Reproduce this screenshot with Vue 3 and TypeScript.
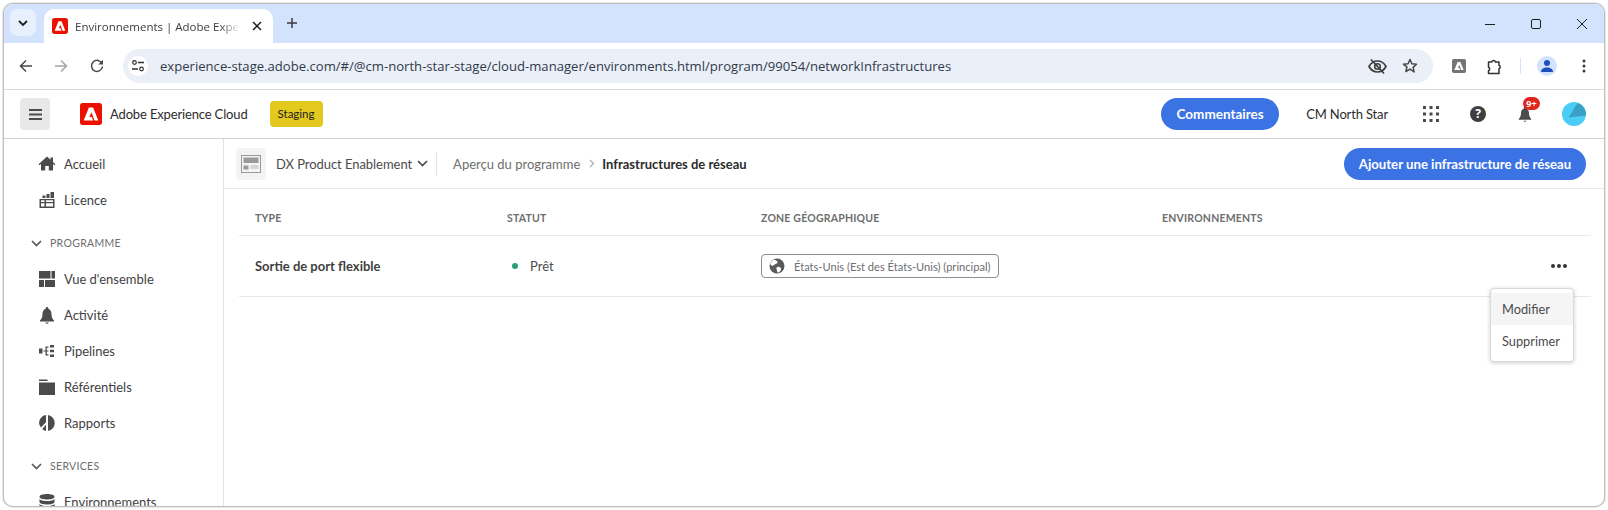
<script setup lang="ts">
interface NavItem {
  label: string;
  icon: string;
}

interface NavGroup {
  title?: string;
  items: NavItem[];
}

const groups: NavGroup[] = [
  {
    items: [
      { label: "Accueil", icon: "M9 1.5.6 9.3l.9 1L3 9v6.5h4.2V11h3.6v4.5H15V9l1.500 1.300.9-1L15 7V2.500h-2.500v2.200z" },
      { label: "Licence", icon: "M12.500 1H16v6h-3.500zM8.500 3H11.500V7H8.500zM4.500 4.500H7.500V7H4.500zM1.500 8h15v9h-15zM3 9.300V11h3.500V9.300zm5 0V11h7V9.300zM3 12.300V15.600h3.500v-3.300zm5 0V15.600h7v-3.300z" },
    ],
  },
  {
    title: "PROGRAMME",
    items: [
      { label: "Vue d'ensemble", icon: "M1 1h11.500v7.500H1zM13.500 1H17v7.500h-3.500zM1 10h5v7H1zM7 10h10v7H7z" },
      { label: "Activité", icon: "M9 1a1.300 1.300 0 0 0-1.300 1.300v.5C5.600 3.500 4.500 5.500 4.500 8c0 3.500-1 5-2.500 6.500V15.500h14v-1C14.500 13 13.500 11.500 13.500 8c0-2.500-1.100-4.500-3.200-5.200v-.5A1.300 1.300 0 0 0 9 1zM7.300 16.500a1.800 1.800 0 0 0 3.400 0z" },
      { label: "Pipelines", icon: "M1 6.500h3.500v5H1zM5.500 8.500h2V4.500h3v1.300H8.800v2.700h1.700v1H8.800v2.700h1.700v1.300h-3V9.500h-2zM12 3h4v2.500h-4zM12 7.800h4v2.400h-4zM12 12.500h4V15h-4z" },
      { label: "Référentiels", icon: "M1 1.500h8l1 1.500H1zM1 4.500h16V17H1z" },
      { label: "Rapports", icon: "M8 1.100v7.200L3 13.400A8 8 0 0 1 1 9a8 8 0 0 1 7-7.900zM10 1.100A8 8 0 0 1 10 16.900zM8 10.400v6.500a8 8 0 0 1-3.800-1.600z" },
    ],
  },
  {
    title: "SERVICES",
    items: [
      { label: "Environnements", icon: "M9 1C5 1 1.500 2 1.500 3.800S5 6.600 9 6.600s7.500-1 7.500-2.800S13 1 9 1zM1.500 6v2.800c0 1.800 3.500 2.800 7.500 2.800s7.500-1 7.500-2.800V6C15.500 7.500 12.500 8 9 8S2.500 7.500 1.500 6zM1.500 11v3.200C1.500 16 5 17 9 17s7.500-1 7.500-2.800V11c-1 1.500-4 2-7.500 2s-6.500-.5-7.500-2z" },
    ],
  },
];

const columns = ["TYPE", "STATUT", "ZONE GÉOGRAPHIQUE", "ENVIRONNEMENTS"];
const adobeMark = "M9.700 5h4.600L20 19h-4.100l-3.500-9-2.100 5.300h2.700l1.300 3.700H4z";
</script>

<template>
  <div class="window">
    <div class="tabstrip">
      <button class="tab-search">
        <svg width="12" height="12" viewBox="0 0 12 12"><path d="M2 4l4 4 4-4" fill="none" stroke="#1f1f1f" stroke-width="1.800" /></svg>
      </button>
      <div class="tab">
        <svg class="favicon" viewBox="0 0 24 24"><rect width="24" height="24" rx="4" fill="#eb1000" /><path :d="adobeMark" fill="#fff" /></svg>
        <span class="tab-title">Environnements | Adobe Experience Cloud</span>
        <svg class="tab-close" width="10" height="10" viewBox="0 0 10 10"><path d="M1 1l8 8M9 1 1 9" stroke="#1f1f1f" stroke-width="1.500" /></svg>
      </div>
      <svg class="new-tab" width="12" height="12" viewBox="0 0 12 12"><path d="M6 1v10M1 6h10" stroke="#3a3a3a" stroke-width="1.500" /></svg>
      <div class="win-controls">
        <svg width="12" height="12" viewBox="0 0 12 12"><path d="M1 6.500h10" stroke="#1f1f1f" /></svg>
        <svg width="12" height="12" viewBox="0 0 12 12"><rect x="1.500" y="1.500" width="9" height="9" rx="1.500" fill="none" stroke="#1f1f1f" /></svg>
        <svg width="12" height="12" viewBox="0 0 12 12"><path d="M1 1l10 10M11 1 1 11" stroke="#1f1f1f" /></svg>
      </div>
    </div>

    <div class="toolbar">
      <svg class="tool back" width="14" height="14" viewBox="0 0 14 14"><path d="M13 7H2M7 1.500 1.500 7 7 12.500" fill="none" stroke="#474747" stroke-width="1.500" /></svg>
      <svg class="tool forward" width="14" height="14" viewBox="0 0 14 14"><path d="M1 7h11M7 1.500 12.500 7 7 12.500" fill="none" stroke="#a3a5a9" stroke-width="1.500" /></svg>
      <svg class="tool reload" width="14" height="14" viewBox="0 0 14 14"><path d="M12 4.500A5.500 5.500 0 1 0 12.500 7.500" fill="none" stroke="#474747" stroke-width="1.500" /><path d="M13 0.800V5.500H8.300z" fill="#474747" /></svg>
      <div class="omnibox">
        <span class="site-info">
          <svg width="14" height="12" viewBox="0 0 14 12"><circle cx="3.500" cy="2.500" r="1.800" fill="none" stroke="#303030" stroke-width="1.200" /><path d="M7 2.500h6M1 9h6" stroke="#303030" stroke-width="1.300" /><circle cx="10.500" cy="9" r="1.800" fill="none" stroke="#303030" stroke-width="1.200" /></svg>
        </span>
        <span class="url">experience-stage.adobe.com/#/@cm-north-star-stage/cloud-manager/environments.html/program/99054/networkInfrastructures</span>
        <svg class="eye" width="19" height="17" viewBox="0 0 19 17"><path d="M1 8.500C3 5 6 3 9.500 3S16 5 18 8.500C16 12 13 14 9.500 14S3 12 1 8.500z" fill="none" stroke="#3f3f3f" stroke-width="1.700" /><circle cx="9.500" cy="8.500" r="2.800" fill="none" stroke="#3f3f3f" stroke-width="1.600" /><path d="M3 1.500 16 15.500" stroke="#3f3f3f" stroke-width="1.800" /></svg>
        <svg class="star" width="16" height="16" viewBox="0 0 16 16"><path d="M8 1.500l1.900 4.300 4.600.5-3.400 3.100 1 4.600L8 11.100l-4.100 2.400 1-4.600L1.500 6.300l4.600-.5z" fill="none" stroke="#474747" stroke-width="1.500" stroke-linejoin="round" /></svg>
      </div>
      <svg class="ext-adobe" width="14" height="14" viewBox="0 0 24 24"><rect width="24" height="24" rx="3" fill="#757575" /><path :d="adobeMark" fill="#fff" /></svg>
      <svg class="ext-puzzle" width="17" height="17" viewBox="0 0 17 17"><path d="M2.500 4h3.200a2 2 0 0 1 3.800 0h3.500v3.300a1.800 1.800 0 0 1 0 3.400v4.800H2.500v-2.800a1.800 1.800 0 0 0 0-3.400z" fill="none" stroke="#303030" stroke-width="1.500" stroke-linejoin="round" /></svg>
      <span class="tool-sep"></span>
      <span class="profile">
        <svg width="14" height="14" viewBox="0 0 14 14"><circle cx="7" cy="4" r="3" fill="#1f4fbf" /><path d="M1 13c0-3 2.500-4.500 6-4.500s6 1.500 6 4.500z" fill="#1f4fbf" /></svg>
      </span>
      <svg class="kebab" width="4" height="14" viewBox="0 0 4 14"><circle cx="2" cy="2" r="1.500" fill="#3a3a3a" /><circle cx="2" cy="7" r="1.500" fill="#3a3a3a" /><circle cx="2" cy="12" r="1.500" fill="#3a3a3a" /></svg>
    </div>

    <header class="app-header">
      <button class="burger">
        <svg width="13" height="11" viewBox="0 0 13 11"><path d="M0 1h13M0 5.500h13M0 10h13" stroke="#4b4b4b" stroke-width="1.800" /></svg>
      </button>
      <svg class="logo" viewBox="0 0 24 24"><rect width="24" height="24" rx="3" fill="#eb1000" /><path :d="adobeMark" fill="#fff" /></svg>
      <span class="brand">Adobe Experience Cloud</span>
      <span class="staging">Staging</span>
      <button class="feedback">Commentaires</button>
      <span class="org">CM North Star</span>
      <svg class="apps" width="16" height="16" viewBox="0 0 16 16" fill="#4b4b4b">
        <rect x="0" y="0" width="3" height="3" /><rect x="6.500" y="0" width="3" height="3" /><rect x="13" y="0" width="3" height="3" />
        <rect x="0" y="6.500" width="3" height="3" /><rect x="6.500" y="6.500" width="3" height="3" /><rect x="13" y="6.500" width="3" height="3" />
        <rect x="0" y="13" width="3" height="3" /><rect x="6.500" y="13" width="3" height="3" /><rect x="13" y="13" width="3" height="3" />
      </svg>
      <span class="help">?</span>
      <span class="bell">
        <svg width="16" height="18" viewBox="0 0 18 18"><path d="M9 1a1.300 1.300 0 0 0-1.300 1.300v.5C5.600 3.500 4.500 5.500 4.500 8c0 3.500-1 5-2.500 6.500V15.500h14v-1C14.500 13 13.500 11.500 13.500 8c0-2.500-1.100-4.500-3.200-5.200v-.5A1.300 1.300 0 0 0 9 1zM7.300 16.500a1.800 1.800 0 0 0 3.400 0z" fill="#4b4b4b" /></svg>
        <span class="badge">9+</span>
      </span>
      <svg class="avatar" width="24" height="24" viewBox="0 0 24 24"><circle cx="12" cy="12" r="12" fill="#4bcdf7" /><path d="M6.500 15.500 15.500 1a12 12 0 0 1 8.400 12.500z" fill="#3aa0c6" /></svg>
    </header>

    <div class="body">
      <nav class="sidebar">
        <template v-for="group in groups" :key="group.title ?? 'top'">
          <div v-if="group.title" class="section">
            <svg width="11" height="7" viewBox="0 0 11 7"><path d="M1 1l4.500 4.500L10 1" fill="none" stroke="#5a5a5a" stroke-width="1.700" /></svg>
            <span>{{ group.title }}</span>
          </div>
          <a v-for="item in group.items" :key="item.label" class="nav-item">
            <svg width="18" height="18" viewBox="0 0 18 18"><path :d="item.icon" fill="#4b4b4b" fill-rule="evenodd" /></svg>
            <span>{{ item.label }}</span>
          </a>
        </template>
      </nav>

      <main class="content">
        <div class="crumbs">
          <span class="program-icon">
            <svg width="20" height="18" viewBox="0 0 20 18"><rect x=".5" y=".5" width="19" height="17" fill="#f4f4f4" stroke="#999" /><rect x="2.500" y="2.500" width="15" height="5.500" fill="#9a9a9a" /><rect x="2.500" y="10.500" width="5" height="4" fill="#9a9a9a" /><path d="M9.500 11h8M9.500 13h8" stroke="#b5b5b5" /></svg>
          </span>
          <span class="program">DX Product Enablement</span>
          <svg class="program-caret" width="11" height="7" viewBox="0 0 11 7"><path d="M1 1l4.500 4.500L10 1" fill="none" stroke="#4b4b4b" stroke-width="1.700" /></svg>
          <span class="crumb-sep"></span>
          <span class="crumb">Aperçu du programme</span>
          <svg class="crumb-arrow" width="6" height="9" viewBox="0 0 6 9"><path d="M1 1l3.500 3.500L1 8" fill="none" stroke="#aaa" stroke-width="1.100" /></svg>
          <span class="crumb-current">Infrastructures de réseau</span>
          <button class="add-btn">Ajouter une infrastructure de réseau</button>
        </div>

        <div class="table">
          <div class="thead">
            <span v-for="col in columns" :key="col">{{ col }}</span>
          </div>
          <div class="row">
            <span class="type">Sortie de port flexible</span>
            <span class="status"><i class="dot"></i>Prêt</span>
            <span>
              <span class="region">
                <svg width="16" height="16" viewBox="0 0 16 16"><circle cx="8" cy="8" r="7.500" fill="#5a5a5a" /><path d="M5 1.500c1.500 1 3 1 3.500 2.500S6 6 5 7 2.500 8 1.500 6.500 3 2.500 5 1.500zM8.500 9c1.500-.5 3 .5 3.500 1.500S11 14 9.500 14.500 8 12 7.500 11 7.500 9.500 8.500 9z" fill="#fff" /></svg>
                États-Unis (Est des États-Unis) (principal)
              </span>
            </span>
            <span></span>
            <span class="more"><i></i><i></i><i></i></span>
          </div>
          <div class="menu">
            <div class="menu-item active">Modifier</div>
            <div class="menu-item">Supprimer</div>
          </div>
        </div>
      </main>
    </div>
  </div>
</template>

<style>
html,
body {
  margin: 0;
  height: 510px;
  overflow: hidden;
  background: #fff;
}
</style>

<style scoped>
.window {
  box-sizing: border-box;
  height: 504px;
  margin: 3px 3px 0 3px;
  width: 1602px;
  border: 1px solid #bdbdbd;
  border-radius: 10px;
  overflow: hidden;
  display: flex;
  flex-direction: column;
  background: #fff;
  font-family: Lato, "Noto Sans", sans-serif;
  color: #2c2c2c;
  box-shadow: 0 0 2px rgba(0, 0, 0, 0.3);
}

button {
  font-family: inherit;
  border: none;
  cursor: pointer;
  padding: 0;
}

.tabstrip {
  height: 39px;
  flex: none;
  background: #d3e3fd;
  display: flex;
  align-items: flex-end;
  padding-left: 6px;
  padding-right: 15px;
}

.tab-search {
  width: 26px;
  height: 27px;
  margin-bottom: 7px;
  border-radius: 8px;
  background: #e8f0fe;
  display: flex;
  align-items: center;
  justify-content: center;
}

.tab {
  box-sizing: border-box;
  width: 229px;
  height: 34px;
  margin-left: 8px;
  background: #fff;
  border-radius: 10px 10px 0 0;
  display: flex;
  align-items: center;
  padding-left: 8px;
}

.favicon {
  width: 16px;
  height: 16px;
  flex: none;
}

.tab-title {
  margin-left: 7px;
  width: 165px;
  flex: none;
  white-space: nowrap;
  overflow: hidden;
  font: 11.5px "Open Sans", sans-serif;
  color: #3c3c3c;
  -webkit-mask-image: linear-gradient(90deg, #000 88%, transparent);
  mask-image: linear-gradient(90deg, #000 88%, transparent);
}

.tab-close {
  margin-left: 12px;
  flex: none;
}

.new-tab {
  margin: 0 0 14px 13px;
}

.win-controls {
  margin-left: auto;
  align-self: center;
  display: flex;
  gap: 34px;
  margin-right: 1px;
}

.toolbar {
  height: 47px;
  flex: none;
  box-sizing: border-box;
  background: #fff;
  border-radius: 8px 8px 0 0;
  display: flex;
  align-items: center;
  padding-left: 15px;
  border-bottom: 1px solid #d9d9d9;
}

.forward {
  margin-left: 21px;
}

.reload {
  margin-left: 22px;
}

.omnibox {
  margin-left: 19px;
  width: 1310px;
  height: 34px;
  border-radius: 17px;
  background: #ebeff7;
  display: flex;
  align-items: center;
  padding-left: 5px;
  box-sizing: border-box;
}

.site-info {
  width: 20px;
  height: 20px;
  border-radius: 50%;
  background: #fff;
  display: flex;
  align-items: center;
  justify-content: center;
  flex: none;
}

.url {
  margin-left: 12px;
  font: 13.1px "Open Sans", sans-serif;
  color: #2f3a4a;
  white-space: nowrap;
}

.eye {
  margin-left: auto;
}

.star {
  margin-left: 15px;
  margin-right: 15px;
}

.ext-adobe {
  margin-left: 19px;
}

.ext-puzzle {
  margin-left: 20px;
}

.tool-sep {
  width: 1px;
  height: 16px;
  background: #d3e3fd;
  margin-left: 17px;
}

.profile {
  width: 20px;
  height: 20px;
  border-radius: 50%;
  background: #d3e3fd;
  display: flex;
  align-items: center;
  justify-content: center;
  margin-left: 16px;
}

.kebab {
  margin-left: 25px;
}

.app-header {
  height: 49px;
  flex: none;
  box-sizing: border-box;
  border-bottom: 1px solid #d3d3d3;
  display: flex;
  align-items: center;
  padding-left: 16px;
}

.burger {
  width: 30px;
  height: 32px;
  background: #e8e8e8;
  border-radius: 4px;
  display: flex;
  align-items: center;
  justify-content: center;
}

.logo {
  width: 22px;
  height: 22px;
  margin-left: 30px;
}

.brand {
  margin-left: 8px;
  font-size: 13px;
  letter-spacing: -0.15px;
  color: #2c2c2c;
}

.staging {
  margin-left: 22px;
  width: 53px;
  height: 26px;
  line-height: 26px;
  text-align: center;
  background: #e3c81d;
  border-radius: 4px;
  font-size: 11.5px;
  color: #222;
}

.feedback {
  margin-left: auto;
  width: 118px;
  height: 32px;
  border-radius: 16px;
  background: #3b73e4;
  color: #fff;
  font-size: 13.5px;
  font-weight: 700;
}

.org {
  margin-left: 27px;
  font-size: 13px;
  letter-spacing: -0.15px;
  color: #2c2c2c;
}

.apps {
  margin-left: 35px;
}

.help {
  margin-left: 31px;
  width: 16px;
  height: 16px;
  border-radius: 50%;
  background: #3f3f3f;
  color: #fff;
  font: 700 12px/16px "Open Sans", sans-serif;
  text-align: center;
}

.bell {
  position: relative;
  margin-left: 31px;
  display: flex;
}

.badge {
  position: absolute;
  left: 6px;
  top: -8px;
  width: 17px;
  height: 13px;
  border-radius: 7px;
  background: #e1251b;
  color: #fff;
  font: 700 9px/13px "Open Sans", sans-serif;
  text-align: center;
}

.avatar {
  margin-left: 29px;
  margin-right: 18px;
}

.body {
  flex: 1;
  min-height: 0;
  display: flex;
}

.sidebar {
  width: 220px;
  flex: none;
  box-sizing: border-box;
  border-right: 1px solid #e3e3e3;
  padding-top: 7px;
  overflow: hidden;
}

.nav-item {
  height: 36px;
  display: flex;
  align-items: center;
  padding-left: 34px;
  gap: 8px;
  font-size: 13px;
  color: #3f3f3f;
}

.section {
  height: 36px;
  margin-top: 7px;
  display: flex;
  align-items: center;
  padding-left: 27px;
  gap: 8px;
  font-size: 10.5px;
  letter-spacing: 0.03em;
  color: #6e6e6e;
}

.content {
  flex: 1;
  min-width: 0;
}

.crumbs {
  height: 50px;
  box-sizing: border-box;
  border-bottom: 1px solid #e8e8e8;
  display: flex;
  align-items: center;
  padding: 0 18px 0 12px;
  font-size: 13px;
}

.program-icon {
  width: 30px;
  height: 32px;
  background: #f3f3f3;
  border-radius: 4px;
  display: flex;
  align-items: center;
  justify-content: center;
}

.program {
  margin-left: 10px;
  letter-spacing: -0.05px;
  color: #4b4b4b;
}

.program-caret {
  margin-left: 5px;
}

.crumb-sep {
  width: 1px;
  height: 24px;
  background: #e3e3e3;
  margin: 0 16px 0 8px;
}

.crumb {
  color: #6e6e6e;
}

.crumb-arrow {
  margin: 0 7px 0 9px;
}

.crumb-current {
  font-weight: 700;
  color: #2c2c2c;
}

.add-btn {
  margin-left: auto;
  width: 242px;
  height: 32px;
  border-radius: 16px;
  background: #3b73e4;
  color: #fff;
  font-size: 13.2px;
  font-weight: 700;
}

.table {
  position: relative;
  margin: 15px 13px 0 15px;
}

.thead,
.row {
  display: grid;
  grid-template-columns: 252px 254px 401px 1fr 60px;
  align-items: center;
  border-bottom: 1px solid #e8e8e8;
}

.thead {
  height: 32px;
  align-items: start;
  padding-top: 8px;
  box-sizing: border-box;
  font-size: 10.5px;
  font-weight: 700;
  letter-spacing: 0.2px;
  color: #6e6e6e;
}

.thead span,
.row > span {
  padding-left: 16px;
}

.row {
  height: 61px;
  box-sizing: border-box;
  font-size: 13px;
}

.type {
  font-weight: 700;
  color: #3f3f3f;
}

.status {
  display: flex;
  align-items: center;
  color: #4b4b4b;
}

.dot {
  width: 6px;
  height: 6px;
  border-radius: 50%;
  background: #2d9d78;
  margin-right: 12px;
  margin-left: 5px;
}

.region {
  display: inline-flex;
  align-items: center;
  box-sizing: border-box;
  height: 24px;
  padding: 0 7px;
  gap: 9px;
  border: 1px solid #8e8e8e;
  border-radius: 4px;
  font-size: 11.1px;
  color: #6e6e6e;
}

.row > .more {
  display: flex;
  gap: 2px;
  padding-left: 20px;
}

.more i {
  width: 4px;
  height: 4px;
  border-radius: 50%;
  background: #333;
}

.menu {
  position: absolute;
  right: 17px;
  top: 84px;
  width: 82px;
  padding: 4px 0;
  background: #fff;
  border: 1px solid #dadada;
  border-radius: 4px;
  box-shadow: 0 1px 4px rgba(0, 0, 0, 0.2);
  font-size: 12.8px;
  color: #4b4b4b;
}

.menu-item {
  height: 32px;
  line-height: 32px;
  padding-left: 11px;
}

.menu-item.active {
  background: #f5f5f5;
}
</style>
